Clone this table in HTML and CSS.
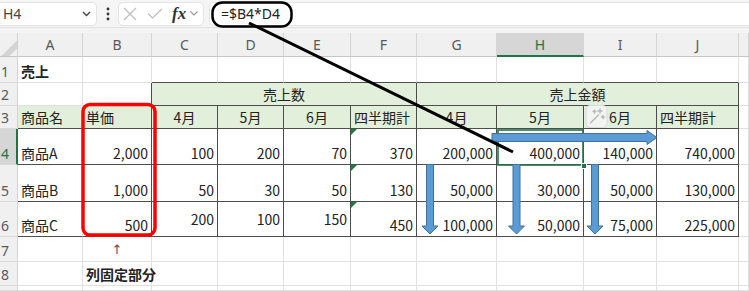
FILE: index.html
```html
<!DOCTYPE html>
<html lang="ja">
<head>
<meta charset="utf-8">
<title>売上</title>
<link rel="stylesheet" href="styles.css">
</head>
<body>
<div class="fbar">
  <div class="namebox"><span>H4</span>
    <svg class="chev" width="9" height="6" viewBox="0 0 9 6"><polyline points="1,1 4.5,4.5 8,1" fill="none" stroke="#444" stroke-width="1.4"/></svg>
  </div>
  <div class="dots"><svg width="4" height="14" viewBox="0 0 4 14"><circle cx="2" cy="2" r="1.4" fill="#333"/><circle cx="2" cy="7" r="1.4" fill="#333"/><circle cx="2" cy="12" r="1.4" fill="#333"/></svg></div>
  <div class="fxbox">
    <svg class="ic-x" width="14" height="14" viewBox="0 0 14 14"><path d="M1 1 L13 13 M13 1 L1 13" stroke="#bdbdbd" stroke-width="1.2" fill="none"/></svg>
    <svg class="ic-ok" width="16" height="11" viewBox="0 0 16 11"><polyline points="1,5.5 5.5,10 15,1" stroke="#bdbdbd" stroke-width="1.2" fill="none"/></svg>
    <span class="fx">fx</span>
    <svg class="chev2" width="8" height="5" viewBox="0 0 8 5"><polyline points="0.5,0.5 4,4 7.5,0.5" fill="none" stroke="#999" stroke-width="1.1"/></svg>
  </div>
  <div class="formula">=$B4*D4</div>
</div>
<div class="band"></div>
<div class="sheet">
  <div class="corner"></div>
  <div class="ch">A</div><div class="ch">B</div><div class="ch">C</div><div class="ch">D</div><div class="ch">E</div><div class="ch">F</div><div class="ch">G</div><div class="ch sel">H</div><div class="ch">I</div><div class="ch">J</div><div class="ch"></div>

  <div class="rh">1</div><div class="c bold">売上</div><div class="c"></div><div class="c bb"></div><div class="c bb"></div><div class="c bb"></div><div class="c bb"></div><div class="c bb"></div><div class="c bb"></div><div class="c bb"></div><div class="c bb"></div><div class="c"></div>

  <div class="rh">2</div><div class="c"></div><div class="c br"></div><div class="c g bb br ctr mid span4">売上数</div><div class="c g bb br ctr mid span4">売上金額</div><div class="c"></div>

  <div class="rh">3</div><div class="c g bb lr mid">商品名</div><div class="c g bb br mid">単価</div><div class="c g bb br ctr mid">4月</div><div class="c g bb br ctr mid">5月</div><div class="c g bb br ctr mid">6月</div><div class="c g bb br mid">四半期計</div><div class="c g bb br ctr mid">4月</div><div class="c g bb br ctr mid">5月</div><div class="c g bb br ctr mid">6月</div><div class="c g bb br mid">四半期計</div><div class="c"></div>

  <div class="rh act">4</div><div class="c bb">商品A</div><div class="c bb br r">2,000</div><div class="c bb br r">100</div><div class="c bb br r">200</div><div class="c bb br r">70</div><div class="c bb br r err">370</div><div class="c bb br r">200,000</div><div class="c bb br r">400,000</div><div class="c bb br r">140,000</div><div class="c bb br r">740,000</div><div class="c"></div>

  <div class="rh">5</div><div class="c bb">商品B</div><div class="c bb br r">1,000</div><div class="c bb br r">50</div><div class="c bb br r">30</div><div class="c bb br r">50</div><div class="c bb br r err">130</div><div class="c bb br r">50,000</div><div class="c bb br r">30,000</div><div class="c bb br r">50,000</div><div class="c bb br r">130,000</div><div class="c"></div>

  <div class="rh">6</div><div class="c bb">商品C</div><div class="c bb br r">500</div><div class="c bb br r mid">200</div><div class="c bb br r mid">100</div><div class="c bb br r mid">150</div><div class="c bb br r err">450</div><div class="c bb br r">100,000</div><div class="c bb br r">50,000</div><div class="c bb br r">75,000</div><div class="c bb br r">225,000</div><div class="c"></div>

  <div class="rh">7</div><div class="c"></div><div class="c ctr mid arrowup">↑</div><div class="c"></div><div class="c"></div><div class="c"></div><div class="c"></div><div class="c"></div><div class="c"></div><div class="c"></div><div class="c"></div><div class="c"></div>

  <div class="rh">8</div><div class="c"></div><div class="c bold">列固定部分</div><div class="c"></div><div class="c"></div><div class="c"></div><div class="c"></div><div class="c"></div><div class="c"></div><div class="c"></div><div class="c"></div><div class="c"></div>

  <div class="rh"></div><div class="c"></div><div class="c"></div><div class="c"></div><div class="c"></div><div class="c"></div><div class="c"></div><div class="c"></div><div class="c"></div><div class="c"></div><div class="c"></div><div class="c"></div>
</div>

<svg class="overlay" width="749" height="291" viewBox="0 0 749 291">
  <rect x="586" y="105.5" width="21" height="22" rx="4" fill="rgba(244,244,244,0.85)" stroke="#dcdcdc"/>
  <g stroke="#b5b5b5" stroke-width="1.3" fill="none" stroke-linecap="round">
    <path d="M590.5 123 L598.5 115"/>
    <path d="M600 109 v4 M598 111 h4"/>
    <path d="M594.5 110 v3 M593 111.5 h3"/>
    <path d="M603 115.5 v3 M601.5 117 h3"/>
  </g>
  <rect x="498" y="130" width="85" height="35" fill="none" stroke="#217346" stroke-width="1.6"/>
  <rect x="581.5" y="163.5" width="5" height="5" fill="#217346" stroke="#fff" stroke-width="1"/>
  <rect x="83" y="104.5" width="72" height="130.5" rx="7" fill="none" stroke="#ff0000" stroke-width="3.5"/>
  <g fill="#5b9bd5" stroke="#41719c" stroke-width="1">
    <polygon points="492,133.5 647,133.5 647,130.5 657,137.5 647,144.5 647,141.5 492,141.5"/>
    <polygon points="426.5,164.5 433.5,164.5 433.5,226 438,226 430,234 422,226 426.5,226"/>
    <polygon points="513,164.5 520,164.5 520,226 524.5,226 516.5,234 508.5,226 513,226"/>
    <polygon points="591.5,164.5 598.5,164.5 598.5,226 603,226 595,234 587,226 591.5,226"/>
  </g>
  <rect x="212.5" y="2.5" width="79" height="24" rx="10" fill="none" stroke="#000" stroke-width="2.5"/>
  <line x1="249" y1="23" x2="513" y2="152" stroke="#000" stroke-width="3"/>
</svg>
</body>
</html>
```

FILE: styles.css
```css
* {
  box-sizing: border-box;
  margin: 0;
  padding: 0;
}

body {
  margin: 0;
  width: 749px;
  height: 291px;
  overflow: hidden;
  position: relative;
  background: #fff;
  color: #222;
  font-family: "Noto Sans CJK JP", "Noto Sans", sans-serif;
}

/* ---------- formula bar ---------- */
.fbar {
  display: flex;
  align-items: center;
  height: 27px;
  background: #f5f5f5;
}

.namebox {
  width: 97px;
  height: 24px;
  display: flex;
  align-items: center;
  justify-content: space-between;
  padding: 0 5px 0 3px;
  background: #fff;
  border: 1px solid #e4e4e4;
  border-left: none;
  border-radius: 0 5px 5px 0;
  font: 14px "Noto Sans", sans-serif;
  color: #444;
}

.dots {
  width: 21px;
  display: flex;
  justify-content: center;
  align-items: center;
}

.fxbox {
  width: 86px;
  height: 24px;
  display: flex;
  align-items: center;
  padding-left: 4px;
  background: #fff;
  border: 1px solid #e4e4e4;
  border-radius: 5px;
}

.ic-ok {
  margin-left: 10px;
}

.fx {
  margin-left: 9px;
  font: italic bold 17px "Liberation Serif", serif;
  color: #333;
  line-height: 20px;
}

.chev2 {
  margin-left: 4px;
}

.formula {
  flex: 1;
  height: 24px;
  margin-left: 5px;
  padding-left: 11px;
  display: flex;
  align-items: center;
  background: #fff;
  border: 1px solid #e4e4e4;
  border-right: none;
  border-radius: 5px 0 0 5px;
  font: 14px "Noto Sans", sans-serif;
  color: #222;
}

.band {
  height: 6px;
  background: #f3f3f3;
  border-top: 1px solid #e2e2e2;
}

/* ---------- sheet ---------- */
.sheet {
  display: grid;
  grid-template-columns: 18px 65px 69px 66px 66px 67px 66px 80px 87px 73px 82px 10px;
  grid-template-rows: 24px 26px 23px 23px 36px 37px 35px 25px 24px 5px;
}

.corner {
  background: #f0f0f0 linear-gradient(135deg, transparent 62%, #d4d4d4 62%, #d4d4d4 82%, transparent 82%);
  border-right: 1px solid #d3d3d3;
  border-bottom: 1px solid #c6c6c6;
}

.ch {
  display: flex;
  align-items: center;
  justify-content: center;
  background: #f0f0f0;
  border-right: 1px solid #d5d5d5;
  border-bottom: 1px solid #c6c6c6;
  font: 14px "Noto Sans", sans-serif;
  color: #595959;
}

.ch.sel {
  background: #d6d6d6;
  color: #217346;
  border-bottom: 2px solid #217346;
}

.rh {
  display: flex;
  align-items: flex-end;
  padding: 0 0 1px 1px;
  line-height: 20px;
  background: #f0f0f0;
  border-right: 1px solid #d3d3d3;
  border-bottom: 1px solid #dadada;
  font: 14px "Noto Sans", sans-serif;
  color: #595959;
}

.rh.act {
  background: #d6d6d6;
  color: #217346;
  border-right: 2px solid #217346;
}

.c {
  position: relative;
  display: flex;
  align-items: flex-end;
  min-width: 0;
  padding: 0 3px 1px;
  border-right: 1px solid #e0e0e0;
  border-bottom: 1px solid #e0e0e0;
  font-size: 14px;
  line-height: 20px;
  white-space: nowrap;
  overflow: visible;
}

.r { justify-content: flex-end; }
.ctr { justify-content: center; }
.mid { align-items: center; padding-bottom: 0; }
.g { background: #e2efda; }
.bb { border-bottom-color: #4d4d4d; }
.br { border-right-color: #4d4d4d; }
.lr { border-right-color: #cfcfcf; }
.bold { font-weight: 700; }
.span4 { grid-column: span 4; }

.arrowup {
  font: 13px "DejaVu Sans", sans-serif;
  color: #555;
}

.err::before {
  content: "";
  position: absolute;
  top: 0;
  left: 0;
  border-top: 6px solid #1e7b3c;
  border-right: 6px solid transparent;
}

.overlay {
  position: absolute;
  top: 0;
  left: 0;
  pointer-events: none;
}
```
